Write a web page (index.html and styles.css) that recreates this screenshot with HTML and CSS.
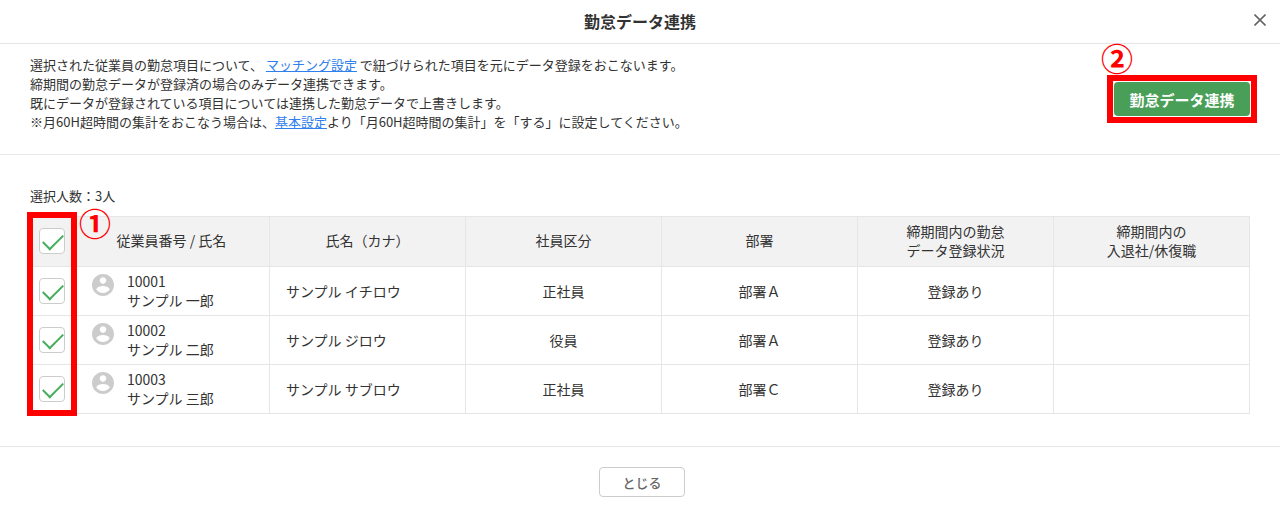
FILE: index.html
```html
<!DOCTYPE html>
<html lang="ja">
<head>
    <meta charset="UTF-8">
    <meta name="viewport" content="width=device-width, initial-scale=1.0">
    <title>勤怠データ連携</title>
    <link rel="stylesheet" href="styles.css">
</head>
<body>
    <svg width="0" height="0" class="defs" aria-hidden="true">
        <symbol id="avatar" viewBox="2 2 20 20">
            <path d="M12 2C6.48 2 2 6.48 2 12s4.48 10 10 10 10-4.48 10-10S17.52 2 12 2zm0 3c1.66 0 3 1.34 3 3s-1.34 3-3 3-3-1.34-3-3 1.34-3 3-3zm0 14.2c-2.5 0-4.71-1.28-6-3.22.03-1.99 4-3.08 6-3.08 1.99 0 5.97 1.09 6 3.08-1.29 1.94-3.5 3.22-6 3.22z"/>
        </symbol>
    </svg>

    <header class="modal-header">
        <h1>勤怠データ連携</h1>
        <button class="close-icon" type="button" aria-label="閉じる">
            <svg width="12" height="12" viewBox="0 0 12 12"><path d="M0.5 0.5L11.5 11.5M11.5 0.5L0.5 11.5"/></svg>
        </button>
    </header>

    <section class="intro">
        <p>
            選択された従業員の勤怠項目について、 <a href="#">マッチング設定</a> で紐づけられた項目を元にデータ登録をおこないます。<br>
            締期間の勤怠データが登録済の場合のみデータ連携できます。<br>
            既にデータが登録されている項目については連携した勤怠データで上書きします。<br>
            ※月60H超時間の集計をおこなう場合は、<a href="#">基本設定</a>より「月60H超時間の集計」を「する」に設定してください。
        </p>
        <div class="action">
            <button class="submit-btn" type="button">勤怠データ連携</button>
            <span class="mark mark-action">②</span>
        </div>
    </section>

    <main class="content">
        <p class="count">選択人数：3人</p>
        <div class="table-wrap">
            <table>
                <colgroup>
                    <col class="col-check">
                    <col span="6">
                </colgroup>
                <thead>
                    <tr>
                        <th><input type="checkbox" aria-label="すべて選択" checked></th>
                        <th>従業員番号 / 氏名</th>
                        <th>氏名（カナ）</th>
                        <th>社員区分</th>
                        <th>部署</th>
                        <th>締期間内の勤怠<br>データ登録状況</th>
                        <th>締期間内の<br>入退社/休復職</th>
                    </tr>
                </thead>
                <tbody>
                    <tr>
                        <td><input type="checkbox" aria-label="サンプル 一郎" checked></td>
                        <td><div class="person"><svg><use href="#avatar"/></svg><div>10001<br>サンプル 一郎</div></div></td>
                        <td class="kana">サンプル イチロウ</td>
                        <td>正社員</td>
                        <td>部署Ａ</td>
                        <td>登録あり</td>
                        <td></td>
                    </tr>
                    <tr>
                        <td><input type="checkbox" aria-label="サンプル 二郎" checked></td>
                        <td><div class="person"><svg><use href="#avatar"/></svg><div>10002<br>サンプル 二郎</div></div></td>
                        <td class="kana">サンプル ジロウ</td>
                        <td>役員</td>
                        <td>部署Ａ</td>
                        <td>登録あり</td>
                        <td></td>
                    </tr>
                    <tr>
                        <td><input type="checkbox" aria-label="サンプル 三郎" checked></td>
                        <td><div class="person"><svg><use href="#avatar"/></svg><div>10003<br>サンプル 三郎</div></div></td>
                        <td class="kana">サンプル サブロウ</td>
                        <td>正社員</td>
                        <td>部署Ｃ</td>
                        <td>登録あり</td>
                        <td></td>
                    </tr>
                </tbody>
            </table>
            <div class="frame"></div>
            <span class="mark mark-check">①</span>
        </div>
    </main>

    <footer>
        <button class="cancel-btn" type="button">とじる</button>
    </footer>
</body>
</html>
```
FILE: styles.css
```css
* {
    box-sizing: border-box;
}
body {
    margin: 0;
    background: #fff;
    color: #333;
    font-family: "Noto Sans CJK JP", sans-serif;
    font-size: 14px;
}
button {
    font-family: inherit;
    cursor: pointer;
}
.defs {
    position: absolute;
}
.modal-header {
    position: relative;
    height: 44px;
    border-bottom: 1px solid #e6e6e6;
}
h1 {
    margin: 0;
    font-size: 16px;
    line-height: 42px;
    font-weight: 700;
    text-align: center;
}
.close-icon {
    position: absolute;
    top: 10px;
    right: 10px;
    display: flex;
    padding: 4px;
    border: none;
    background: none;
}
.close-icon path {
    stroke: #666;
    stroke-width: 1.6;
}
.intro {
    display: flex;
    justify-content: space-between;
    align-items: flex-start;
    padding: 11px 23px 23px 30px;
    border-bottom: 1px solid #e8e8e8;
}
.intro p {
    margin: 0;
    font-size: 13px;
    line-height: 19px;
}
a {
    color: #2f80ed;
    text-decoration: underline;
}
.action {
    position: relative;
    margin-top: 20px;
    padding: 1px;
    border: 6px solid #f00;
}
.submit-btn {
    display: block;
    width: 136px;
    height: 34px;
    padding: 0;
    border: none;
    border-radius: 4px;
    background: #4a9f58;
    color: #fff;
    font-size: 15px;
    font-weight: 700;
}
.mark {
    position: absolute;
    color: #f00;
    font-size: 32px;
    line-height: 32px;
    font-weight: 700;
}
.mark-action {
    top: -40px;
    left: -12px;
}
.content {
    padding: 31px 30px 32px;
}
.count {
    margin: 0 0 11px;
    font-size: 13px;
    line-height: 19px;
}
.table-wrap {
    position: relative;
}
table {
    width: 100%;
    table-layout: fixed;
    border-collapse: collapse;
    line-height: 19px;
}
.col-check {
    width: 43px;
}
th, td {
    height: 49px;
    padding: 0;
    border: 1px solid #e6e6e6;
    font-weight: 400;
    text-align: center;
}
th {
    height: 50px;
    padding-bottom: 2px;
    background: #f2f2f2;
}
td.kana {
    padding-left: 16px;
    text-align: left;
}
.person {
    display: flex;
    gap: 13px;
    padding-left: 18px;
    text-align: left;
}
.person svg {
    width: 22px;
    height: 22px;
    margin-top: 2px;
    fill: #ccc;
}
input[type="checkbox"] {
    appearance: none;
    position: relative;
    display: block;
    width: 26px;
    height: 26px;
    margin: 0 auto;
    border: 1px solid #ccc;
    border-radius: 4px;
    background: #fff;
}
input[type="checkbox"]:checked::after {
    content: "";
    position: absolute;
    top: 5px;
    left: 3px;
    width: 18px;
    height: 9px;
    border: solid #46ad5c;
    border-width: 0 0 2px 2px;
    transform: rotate(-45deg);
}
.frame {
    position: absolute;
    top: -4px;
    bottom: -2px;
    left: -3px;
    width: 50px;
    border: 6px solid #f00;
    pointer-events: none;
}
.mark-check {
    top: -10px;
    left: 49px;
}
footer {
    padding: 20px 16px 20px 20px;
    border-top: 1px solid #e6e6e6;
    text-align: center;
}
.cancel-btn {
    width: 86px;
    height: 30px;
    padding: 0;
    border: 1px solid #ccc;
    border-radius: 4px;
    background: #fff;
    color: #666;
    font-size: 13px;
    font-weight: 500;
}
```
